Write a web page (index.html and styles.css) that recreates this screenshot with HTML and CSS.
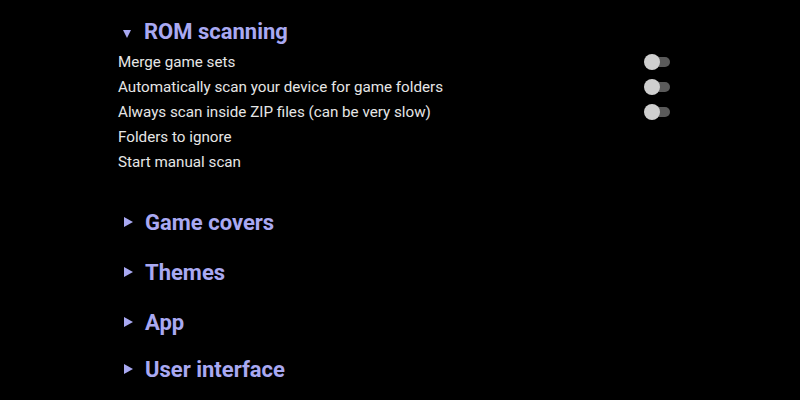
FILE: index.html
```html
<!DOCTYPE html>
<html>
<head>
<meta charset="utf-8">
<link rel="stylesheet" href="styles.css">
</head>
<body>
<div class="page">
  <div class="section open">
    <div class="section-title"><span class="tri down"></span><span>ROM scanning</span></div>
    <div class="item"><span>Merge game sets</span><span class="switch"><span class="thumb"></span></span></div>
    <div class="item"><span>Automatically scan your device for game folders</span><span class="switch"><span class="thumb"></span></span></div>
    <div class="item"><span>Always scan inside ZIP files (can be very slow)</span><span class="switch"><span class="thumb"></span></span></div>
    <div class="item"><span>Folders to ignore</span></div>
    <div class="item"><span>Start manual scan</span></div>
  </div>
  <div class="section collapsed first">
    <div class="section-title"><span class="tri right"></span><span>Game covers</span></div>
  </div>
  <div class="section collapsed">
    <div class="section-title"><span class="tri right"></span><span>Themes</span></div>
  </div>
  <div class="section collapsed">
    <div class="section-title"><span class="tri right"></span><span>App</span></div>
  </div>
  <div class="section collapsed last">
    <div class="section-title"><span class="tri right"></span><span>User interface</span></div>
  </div>
</div>
</body>
</html>
```
FILE: styles.css
```css
html, body {
  margin: 0;
  padding: 0;
  background: #000;
  height: 100%;
  overflow: hidden;
}
body {
  font-family: Roboto, "Liberation Sans", sans-serif;
  color: #e6e6e6;
}
.page {
  padding: 13px 0 0 118px;
  width: 552px;
}
.section-title {
  display: flex;
  align-items: center;
  height: 36px;
  padding-left: 5px;
  font-size: 22px;
  font-weight: 700;
  color: #a9a9f2;
}
.collapsed .section-title {
  height: 50px;
}
.section.first {
  margin-top: 23px;
}
.section.last .section-title {
  height: 44px;
}
.tri {
  display: inline-block;
  width: 0;
  height: 0;
}
.tri.down {
  border-left: 4.5px solid transparent;
  border-right: 4.5px solid transparent;
  border-top: 8px solid #a9a9f2;
  margin-top: 5px;
  margin-right: 13px;
}
.tri.right {
  border-top: 5.5px solid transparent;
  border-bottom: 5.5px solid transparent;
  border-left: 9px solid #a9a9f2;
  margin-left: 1px;
  margin-right: 12px;
}
.item {
  display: flex;
  align-items: center;
  justify-content: space-between;
  height: 25px;
  font-size: 15.2px;
}
.switch {
  position: relative;
  width: 22px;
  height: 10px;
  border-radius: 5px;
  background: #5a5a5a;
}
.thumb {
  position: absolute;
  left: -4px;
  top: -3px;
  width: 16px;
  height: 16px;
  border-radius: 50%;
  background: #cfcfcf;
}
```
